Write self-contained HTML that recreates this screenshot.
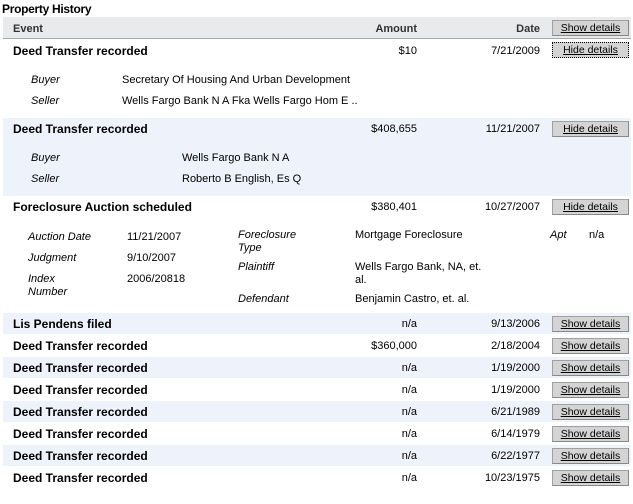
<!DOCTYPE html>
<html><head><style>
*{margin:0;padding:0;box-sizing:border-box}
body{width:633px;height:504px;background:#fff;font-family:"Liberation Sans",Verdana,sans-serif;font-size:11px;color:#000;position:relative;overflow:hidden}
.a{position:absolute;white-space:nowrap;margin-top:2px}
.band{position:absolute;left:3px;width:628px;background:#eef2fa}
.b{font-weight:bold;font-size:12px}
.r{text-align:right}
.i{font-style:italic}
.btn{position:absolute;left:552px;width:77px;height:16px;background:#d4d4d4;border:1px solid #a0a0a0;border-right-color:#888;border-bottom-color:#888;font-size:10.5px;text-decoration:underline;text-align:center;line-height:14px}
</style></head><body>
<div class="a b" style="left:2px;top:0px;font-size:12px;letter-spacing:-0.3px">Property History</div>
<div style="position:absolute;left:3px;top:17px;width:628px;height:22px;background:#e9eaec;border-bottom:1px solid #a8a8a8"></div>
<div class="a b" style="left:13px;top:21px;color:#333;font-size:11px">Event</div>
<div class="a b r" style="left:300px;width:117px;top:21px;color:#333;font-size:11px">Amount</div>
<div class="a b r" style="left:440px;width:100px;top:21px;color:#333;font-size:11px">Date</div>
<div class="btn" style="top:20px">Show details</div>

<div class="band" style="top:118px;height:78px"></div>
<div class="band" style="top:313px;height:21px"></div>
<div class="band" style="top:357px;height:21px"></div>
<div class="band" style="top:401px;height:21px"></div>
<div class="band" style="top:445px;height:21px"></div>

<div class="a b" style="left:13px;top:42px">Deed Transfer recorded</div>
<div class="a r" style="left:300px;width:117px;top:43px">$10</div>
<div class="a r" style="left:440px;width:100px;top:43px">7/21/2009</div>
<div class="btn" style="top:42px;border:1px dotted #000">Hide details</div>
<div class="a i" style="left:31px;top:72px">Buyer</div>
<div class="a" style="left:122px;top:72px">Secretary Of Housing And Urban Development</div>
<div class="a i" style="left:31px;top:93px">Seller</div>
<div class="a" style="left:122px;top:93px">Wells Fargo Bank N A Fka Wells Fargo Hom E ..</div>

<div class="a b" style="left:13px;top:120px">Deed Transfer recorded</div>
<div class="a r" style="left:300px;width:117px;top:121px">$408,655</div>
<div class="a r" style="left:440px;width:100px;top:121px">11/21/2007</div>
<div class="btn" style="top:121px">Hide details</div>
<div class="a i" style="left:31px;top:150px">Buyer</div>
<div class="a" style="left:182px;top:150px">Wells Fargo Bank N A</div>
<div class="a i" style="left:31px;top:171px">Seller</div>
<div class="a" style="left:182px;top:171px">Roberto B English, Es Q</div>

<div class="a b" style="left:13px;top:198px">Foreclosure Auction scheduled</div>
<div class="a r" style="left:300px;width:117px;top:199px">$380,401</div>
<div class="a r" style="left:440px;width:100px;top:199px">10/27/2007</div>
<div class="btn" style="top:199px">Hide details</div>
<div class="a i" style="left:28px;top:229px">Auction Date</div>
<div class="a" style="left:127px;top:229px">11/21/2007</div>
<div class="a i" style="left:28px;top:250px">Judgment</div>
<div class="a" style="left:127px;top:250px">9/10/2007</div>
<div class="a i" style="left:28px;top:271px;line-height:13px">Index<br>Number</div>
<div class="a" style="left:127px;top:271px">2006/20818</div>
<div class="a i" style="left:238px;top:227px;line-height:13px">Foreclosure<br>Type</div>
<div class="a" style="left:355px;top:227px">Mortgage Foreclosure</div>
<div class="a i" style="left:550px;top:227px">Apt</div>
<div class="a" style="left:589px;top:227px">n/a</div>
<div class="a i" style="left:238px;top:259px">Plaintiff</div>
<div class="a" style="left:355px;top:259px;line-height:13px">Wells Fargo Bank, NA, et.<br>al.</div>
<div class="a i" style="left:238px;top:291px">Defendant</div>
<div class="a" style="left:355px;top:291px">Benjamin Castro, et. al.</div>

<div class="a b" style="left:13px;top:315px">Lis Pendens filed</div>
<div class="a r" style="left:300px;width:117px;top:316px">n/a</div>
<div class="a r" style="left:440px;width:100px;top:316px">9/13/2006</div>
<div class="btn" style="top:316px">Show details</div>

<div class="a b" style="left:13px;top:337px">Deed Transfer recorded</div>
<div class="a r" style="left:300px;width:117px;top:338px">$360,000</div>
<div class="a r" style="left:440px;width:100px;top:338px">2/18/2004</div>
<div class="btn" style="top:338px">Show details</div>

<div class="a b" style="left:13px;top:359px">Deed Transfer recorded</div>
<div class="a r" style="left:300px;width:117px;top:360px">n/a</div>
<div class="a r" style="left:440px;width:100px;top:360px">1/19/2000</div>
<div class="btn" style="top:360px">Show details</div>

<div class="a b" style="left:13px;top:381px">Deed Transfer recorded</div>
<div class="a r" style="left:300px;width:117px;top:382px">n/a</div>
<div class="a r" style="left:440px;width:100px;top:382px">1/19/2000</div>
<div class="btn" style="top:382px">Show details</div>

<div class="a b" style="left:13px;top:403px">Deed Transfer recorded</div>
<div class="a r" style="left:300px;width:117px;top:404px">n/a</div>
<div class="a r" style="left:440px;width:100px;top:404px">6/21/1989</div>
<div class="btn" style="top:404px">Show details</div>

<div class="a b" style="left:13px;top:425px">Deed Transfer recorded</div>
<div class="a r" style="left:300px;width:117px;top:426px">n/a</div>
<div class="a r" style="left:440px;width:100px;top:426px">6/14/1979</div>
<div class="btn" style="top:426px">Show details</div>

<div class="a b" style="left:13px;top:447px">Deed Transfer recorded</div>
<div class="a r" style="left:300px;width:117px;top:448px">n/a</div>
<div class="a r" style="left:440px;width:100px;top:448px">6/22/1977</div>
<div class="btn" style="top:448px">Show details</div>

<div class="a b" style="left:13px;top:469px">Deed Transfer recorded</div>
<div class="a r" style="left:300px;width:117px;top:470px">n/a</div>
<div class="a r" style="left:440px;width:100px;top:470px">10/23/1975</div>
<div class="btn" style="top:470px">Show details</div>
</body></html>
